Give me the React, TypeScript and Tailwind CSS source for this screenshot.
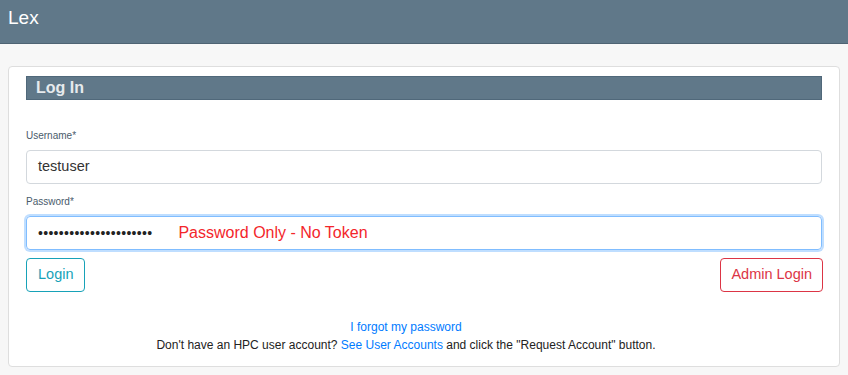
const font = { fontFamily: '"Liberation Sans", Arial, sans-serif' };

const Header = () => {
  return (
    <div className="h-[44px] border-b border-[#4e6373] bg-[#607889] pl-[8px] pt-[7px]">
      <span className="text-[19px] leading-[22px] text-white">Lex</span>
    </div>
  );
};

const Field = ({ label, children, focused }: { label: string; children: React.ReactNode; focused?: boolean }) => {
  return (
    <div>
      <div className="mb-[8px] text-[10px] leading-[12px] text-[#4a5b6b]">{label}</div>
      <div
        className={
          focused
            ? "flex h-[34px] items-center rounded-[4px] border border-[#80bdff] px-[11px] shadow-[0_0_0_2px_rgba(0,123,255,0.25)]"
            : "flex h-[34px] items-center rounded-[4px] border border-[#d3d8dd] px-[11px]"
        }
      >
        {children}
      </div>
    </div>
  );
};

const LoginCard = () => {
  return (
    <div className="rounded-[4px] border border-[#dedede] bg-white px-[17px] pb-[12px] pt-[9px]">
      {/* title bar */}
      <div className="h-[24px] border border-[#50687a] bg-[#607889] pl-[9px] text-[16px] font-bold leading-[22px] text-[#e6eaed]">
        Log In
      </div>

      <div className="mt-[30px]">
        <Field label="Username*">
          <span className="text-[14.5px] text-[#333]">testuser</span>
        </Field>
      </div>

      <div className="mt-[12px]">
        <Field label="Password*" focused>
          <span className="text-[14px] tracking-[0.3px] text-[#222]">••••••••••••••••••••••</span>
          <span className="ml-[26px] text-[16px] text-[#f3262b]">Password Only - No Token</span>
        </Field>
      </div>

      {/* buttons */}
      <div className="mt-[8px] flex items-center justify-between">
        <button className="h-[34px] rounded-[4px] border border-[#17a2b8] px-[11px] text-[14.5px] text-[#17a2b8]">
          Login
        </button>
        <button className="mr-[-1px] h-[34px] rounded-[4px] border border-[#dc3545] px-[10px] text-[14.5px] text-[#dc3545]">
          Admin Login
        </button>
      </div>

      <div className="mt-[26px] pr-[36px] text-center text-[12px] leading-[18px] text-[#222]">
        <div>
          <a className="text-[#007bff]">I forgot my password</a>
        </div>
        <div>
          Don't have an HPC user account? <a className="text-[#007bff]">See User Accounts</a> and click the "Request
          Account" button.
        </div>
      </div>
    </div>
  );
};

export default function App() {
  return (
    <div className="min-h-[375px] w-[848px] bg-[#f7f7f7]" style={font}>
      <Header />
      <div className="px-[8px] pt-[22px]">
        <LoginCard />
      </div>
    </div>
  );
}
